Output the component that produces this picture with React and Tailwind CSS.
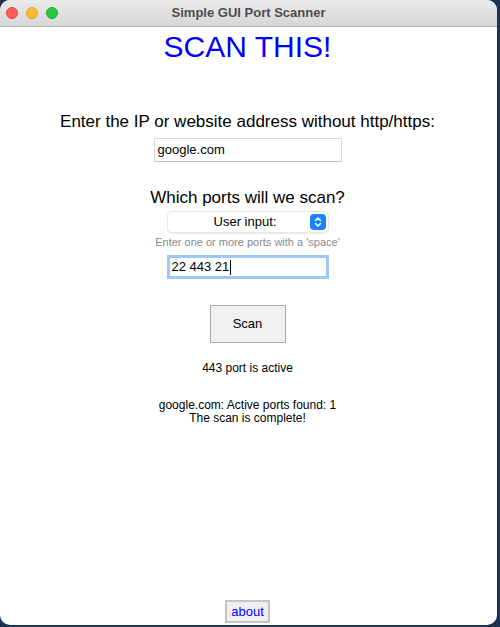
export default function App() {
  return (
    <div className="w-[500px] h-[627px] bg-[#1c3352] overflow-hidden" style={{ fontFamily: '"Liberation Sans", Arial, sans-serif' }}>
      <div className="w-[497px] h-[625px] bg-white rounded-[10px] overflow-hidden flex flex-col">
        <div className="h-[27px] shrink-0 bg-gradient-to-b from-[#ebebeb] to-[#d6d6d6] border-b border-[#b5b5b5] flex items-center relative">
          <div className="flex items-center gap-[8px] pl-[6px]">
            <span className="w-[12px] h-[12px] rounded-full bg-[#fe5f57] border border-[#e0443e]" />
            <span className="w-[12px] h-[12px] rounded-full bg-[#febc2e] border border-[#dea123]" />
            <span className="w-[12px] h-[12px] rounded-full bg-[#28c840] border border-[#1aab29]" />
          </div>
          <div className="absolute inset-0 flex items-center justify-center text-[13px] font-bold text-[#4d4d4d]">Simple GUI Port Scanner</div>
        </div>
        <div className="flex-1 flex flex-col items-center pr-[2px]">
          <div className="text-[30px] leading-[34px] text-[#0000ff] mt-[3px]">SCAN THIS!</div>
          <div className="text-[17px] leading-[20px] text-black mt-[48px]">Enter the IP or website address without http/https:</div>
          <div className="mt-[6px] w-[188px] h-[24px] border border-[#d9d9d9] border-b-[#bdbdbd] bg-white flex items-center px-[3px] text-[13px] text-black">google.com</div>
          <div className="text-[17px] leading-[20px] text-black mt-[26px]">Which ports will we scan?</div>
          <div className="mt-[3px] w-[162px] h-[22px] rounded-[5px] border border-[#e8e8e8] bg-white flex items-center relative shadow-[0_0.5px_1px_rgba(0,0,0,0.08)]">
            <span className="flex-1 text-center text-[13px] text-black pr-[5px]">User input:</span>
            <span className="absolute right-[2px] top-[2px] w-[16px] h-[16px] rounded-[4px] bg-[#1a82fb] flex items-center justify-center">
              <svg width="8" height="12" viewBox="0 0 8 12" fill="none" stroke="white" strokeWidth="1.5" strokeLinecap="round" strokeLinejoin="round">
                <path d="M1.5 4.5 L4 2 L6.5 4.5" />
                <path d="M1.5 7.5 L4 10 L6.5 7.5" />
              </svg>
            </span>
          </div>
          <div className="mt-[2px] text-[11px] leading-[14px] text-[#8a8a8a]">Enter one or more ports with a 'space'</div>
          <div className="mt-[6px] w-[162px] h-[24px] border-[3px] border-[#9ec7f7] bg-white flex items-center px-[2px] text-[13px] text-black">
            <span>22 443 21</span>
            <span className="w-px h-[15px] bg-black ml-px" />
          </div>
          <div className="mt-[26px] w-[76px] h-[38px] border border-[#a9a9a9] bg-[#f0f0f0] flex items-center justify-center text-[13px] text-black">Scan</div>
          <div className="mt-[18px] text-[12px] leading-[14px] text-black">443 port is active</div>
          <div className="mt-[24px] text-[12px] leading-[13px] text-black text-center">
            <div>google.com: Active ports found: 1</div>
            <div>The scan is complete!</div>
          </div>
          <div className="flex-1" />
          <div className="mb-[2px] w-[45px] h-[23px] border-2 border-[#c4c4c4] bg-[#efefef] flex items-center justify-center text-[13px] text-[#0000ff]">about</div>
        </div>
      </div>
    </div>
  );
}
